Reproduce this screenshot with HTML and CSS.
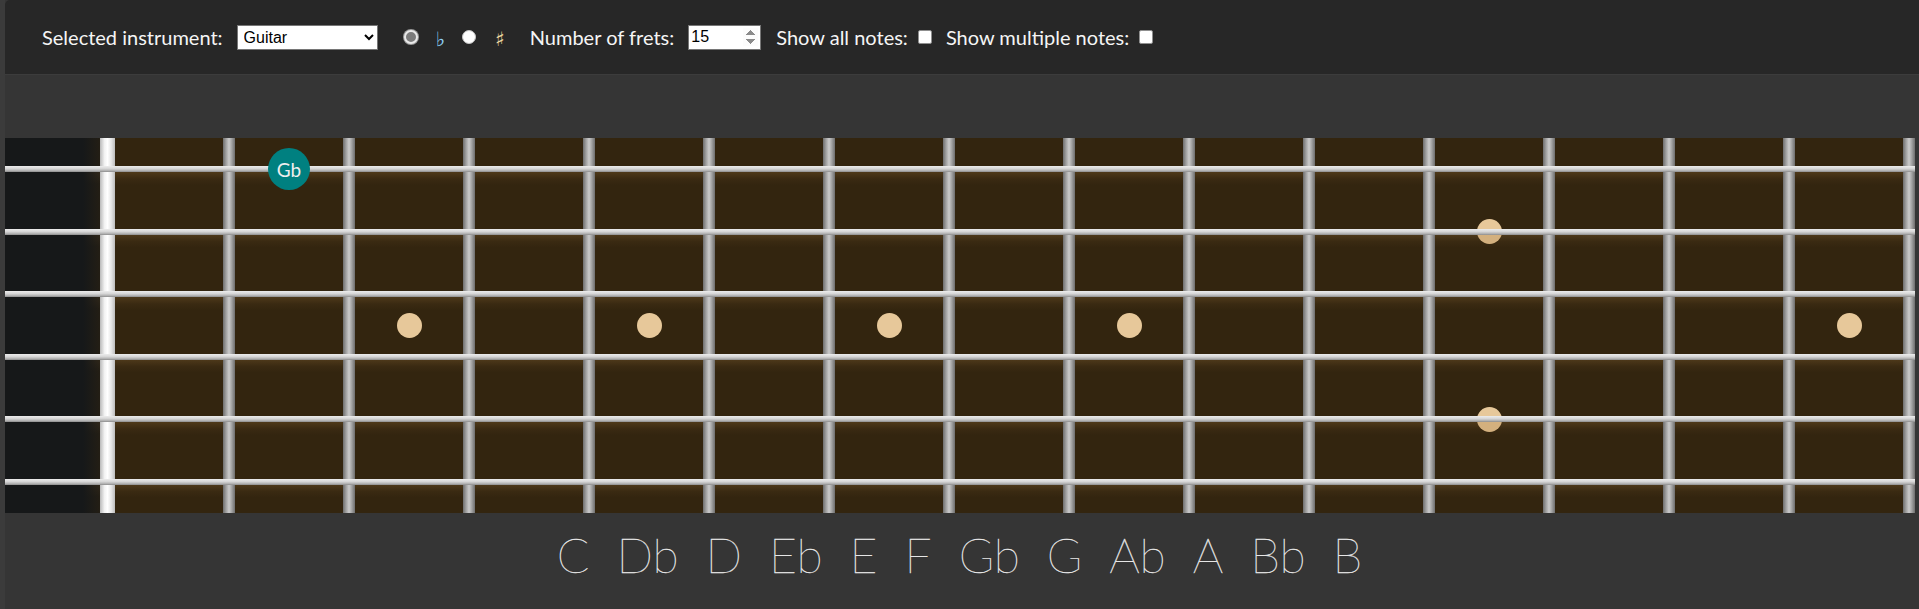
FILE: index.html
```html
<!DOCTYPE html>
<html lang="en">
<head>
<meta charset="utf-8">
<title>Fretboard</title>
<link rel="stylesheet" href="styles.css">
</head>
<body>
<div class="app">
  <header class="toolbar">
    <label class="field field-instrument">
      <span class="label">Selected instrument:</span>
      <select class="select">
        <option>Guitar</option>
        <option>Bass</option>
        <option>Ukulele</option>
      </select>
    </label>
    <div class="accidentals">
      <input type="radio" name="acc" class="radio" checked>
      <span class="acc acc-flat">♭</span>
      <input type="radio" name="acc" class="radio">
      <span class="acc acc-sharp">♯</span>
    </div>
    <label class="field field-frets">
      <span class="label">Number of frets:</span>
      <input type="number" class="number" value="15" min="1" max="24">
    </label>
    <label class="field field-check">
      <span class="label">Show all notes:</span>
      <input type="checkbox" class="check">
    </label>
    <label class="field field-check">
      <span class="label">Show multiple notes:</span>
      <input type="checkbox" class="check">
    </label>
  </header>

  <div class="spacer"></div>

  <div class="board">
    <div class="neck">
      <div class="head"></div>
      <div class="nut"></div>
      <div class="space"></div><div class="fret"></div>
      <div class="space"></div><div class="fret"></div>
      <div class="space"></div><div class="fret"></div>
      <div class="space"></div><div class="fret"></div>
      <div class="space"></div><div class="fret"></div>
      <div class="space"></div><div class="fret"></div>
      <div class="space"></div><div class="fret"></div>
      <div class="space"></div><div class="fret"></div>
      <div class="space"></div><div class="fret"></div>
      <div class="space"></div><div class="fret"></div>
      <div class="space"></div><div class="fret"></div>
      <div class="space"></div><div class="fret"></div>
      <div class="space"></div><div class="fret"></div>
      <div class="space"></div><div class="fret"></div>
      <div class="space"></div><div class="fret"></div>
    </div>

    <div class="grid-layer inlays">
      <span class="dot dot-mid fret-3"></span>
      <span class="dot dot-mid fret-5"></span>
      <span class="dot dot-mid fret-7"></span>
      <span class="dot dot-mid fret-9"></span>
      <span class="dot dot-upper fret-12"></span>
      <span class="dot dot-lower fret-12"></span>
      <span class="dot dot-mid fret-15"></span>
    </div>

    <div class="strings">
      <div class="string-row"><div class="string"></div></div>
      <div class="string-row"><div class="string"></div></div>
      <div class="string-row"><div class="string"></div></div>
      <div class="string-row"><div class="string"></div></div>
      <div class="string-row"><div class="string"></div></div>
      <div class="string-row"><div class="string"></div></div>
    </div>

    <div class="grid-layer notes">
      <span class="note string-1 fret-2">Gb</span>
    </div>
  </div>

  <div class="scale">
    <span class="scale-note">C</span>
    <span class="scale-note">Db</span>
    <span class="scale-note">D</span>
    <span class="scale-note">Eb</span>
    <span class="scale-note">E</span>
    <span class="scale-note">F</span>
    <span class="scale-note">Gb</span>
    <span class="scale-note">G</span>
    <span class="scale-note">Ab</span>
    <span class="scale-note">A</span>
    <span class="scale-note">Bb</span>
    <span class="scale-note">B</span>
  </div>
</div>
</body>
</html>
```

FILE: styles.css
```css
* {
  box-sizing: border-box;
}

html,
body {
  margin: 0;
  height: 100%;
}

body {
  background: #3b3b3b;
  font-family: Lato, "Liberation Sans", sans-serif;
  color: #f5f5f5;
  overflow: hidden;
}

.app {
  margin-left: 5px;
  height: 609px;
  background: #353535;
  display: flex;
  flex-direction: column;
}

/* ---------- toolbar ---------- */

.toolbar {
  height: 75px;
  flex: none;
  display: flex;
  align-items: center;
  padding-left: 37px;
  background: #272727;
  border-bottom: 1px solid #3c3c3c;
  border-top-left-radius: 5px;
  font-size: 20px;
}

.field {
  display: flex;
  align-items: center;
  gap: 14px;
  margin-right: 15px;
}

.field-instrument {
  margin-right: 26px;
}

.field-check {
  gap: 10px;
  margin-right: 14px;
}

.label {
  white-space: nowrap;
}

.select {
  width: 141px;
  height: 25px;
  font-family: "Liberation Sans", Arial, sans-serif;
  font-size: 16px;
  color: #000;
  background: #fff;
  border: 1px solid #767676;
  border-radius: 0;
  padding: 0 2px;
  margin: 0;
}

.accidentals {
  display: flex;
  align-items: center;
  margin-right: 25px;
}

.radio {
  appearance: none;
  -webkit-appearance: none;
  width: 14px;
  height: 14px;
  margin: 0;
  border-radius: 50%;
  background: #fff;
  border: 1px solid #c4c4c4;
}

.radio:checked {
  background: #7b7b7b;
  border: 2px solid #e9e9e9;
  box-shadow: 0 0 0 1px #9a9a9a;
}

.acc {
  font-family: "DejaVu Sans", sans-serif;
  font-size: 20px;
  line-height: 1;
  margin: 4px 17px 0 18px;
}

.acc-flat {
  color: #8fd2f6;
}

.acc-sharp {
  color: #eed9a2;
  margin-right: 0;
  margin-left: 19px;
}

.number {
  width: 73px;
  height: 25px;
  margin: 0;
  padding: 0 2px;
  font-family: "Liberation Sans", Arial, sans-serif;
  font-size: 16px;
  color: #000;
  background: #fff;
  border: 1px solid #767676;
  border-radius: 0;
}

.number::-webkit-inner-spin-button {
  opacity: 1;
}

.check {
  appearance: none;
  -webkit-appearance: none;
  width: 14px;
  height: 14px;
  margin: 0;
  background: #fff;
  border: 1px solid #8f8f8f;
  border-radius: 2px;
}

/* ---------- board ---------- */

.spacer {
  height: 63px;
  flex: none;
}

.board {
  display: grid;
  width: 1910px;
  height: 375px;
  flex: none;
}

.neck,
.grid-layer,
.strings {
  grid-area: 1 / 1;
}

.neck {
  display: flex;
}

.head {
  width: 95px;
  background:
    linear-gradient(to right, #161819 0, #161819 78px, rgba(22, 24, 25, 0.55) 95px),
    repeating-linear-gradient(to bottom, #33250f 0, #33250f 34px, #4e391a 34px, #33250f 46px, #33250f 62.5px);
}

.nut {
  width: 15px;
  background: linear-gradient(to right, #b9b9b9 0%, #f2f2f2 30%, #ffffff 50%, #e6e6e6 75%, #bdbdbd 100%);
}

.space {
  width: 108px;
  background: repeating-linear-gradient(
    to bottom,
    #33250f 0,
    #33250f 34px,
    #4e391a 34px,
    #3a2a12 41px,
    #33250f 47px,
    #33250f 62.5px
  );
}

.fret {
  width: 12px;
  background: linear-gradient(to right, #6e6e6e 0%, #a8a8a8 30%, #cbcbcb 50%, #a8a8a8 70%, #6e6e6e 100%);
}

.grid-layer {
  display: grid;
  grid-template-columns: 95px 15px repeat(15, 108px 12px);
  grid-template-rows: repeat(6, 62.5px);
}

.dot {
  width: 25px;
  height: 25px;
  border-radius: 50%;
  background: #e7c89a;
  justify-self: center;
  align-self: center;
}

.dot-mid {
  grid-row: 3 / 5;
}

.dot-upper {
  grid-row: 2;
  background: linear-gradient(to bottom, #e7c89a 50%, #d3b07e 50%);
}

.dot-lower {
  grid-row: 5;
  background: linear-gradient(to bottom, #e7c89a 50%, #d3b07e 50%);
}

.fret-2 { grid-column: 5; }
.fret-3 { grid-column: 7; }
.fret-5 { grid-column: 11; }
.fret-7 { grid-column: 15; }
.fret-9 { grid-column: 19; }
.fret-12 { grid-column: 25; }
.fret-15 { grid-column: 31; }

.strings {
  display: flex;
  flex-direction: column;
}

.string-row {
  flex: 1;
  display: flex;
  align-items: center;
}

.string {
  width: 100%;
  height: 6px;
  background: linear-gradient(to bottom, #ececec 0%, #d6d6d6 45%, #b4b4b4 75%, #8c8c8c 100%);
}

.note {
  width: 42px;
  height: 42px;
  border-radius: 50%;
  background: #008080;
  color: #eeeeee;
  font-size: 19px;
  display: flex;
  align-items: center;
  justify-content: center;
  justify-self: center;
  align-self: center;
}

.string-1 {
  grid-row: 1;
}

/* ---------- scale ---------- */

.scale {
  display: flex;
  justify-content: center;
  gap: 27px;
  padding-top: 13px;
  padding-right: 5px;
  font-size: 48px;
  font-weight: 200;
  color: #f2f2f2;
  -webkit-text-stroke: 0.35px #e6e6e6;
}
```
